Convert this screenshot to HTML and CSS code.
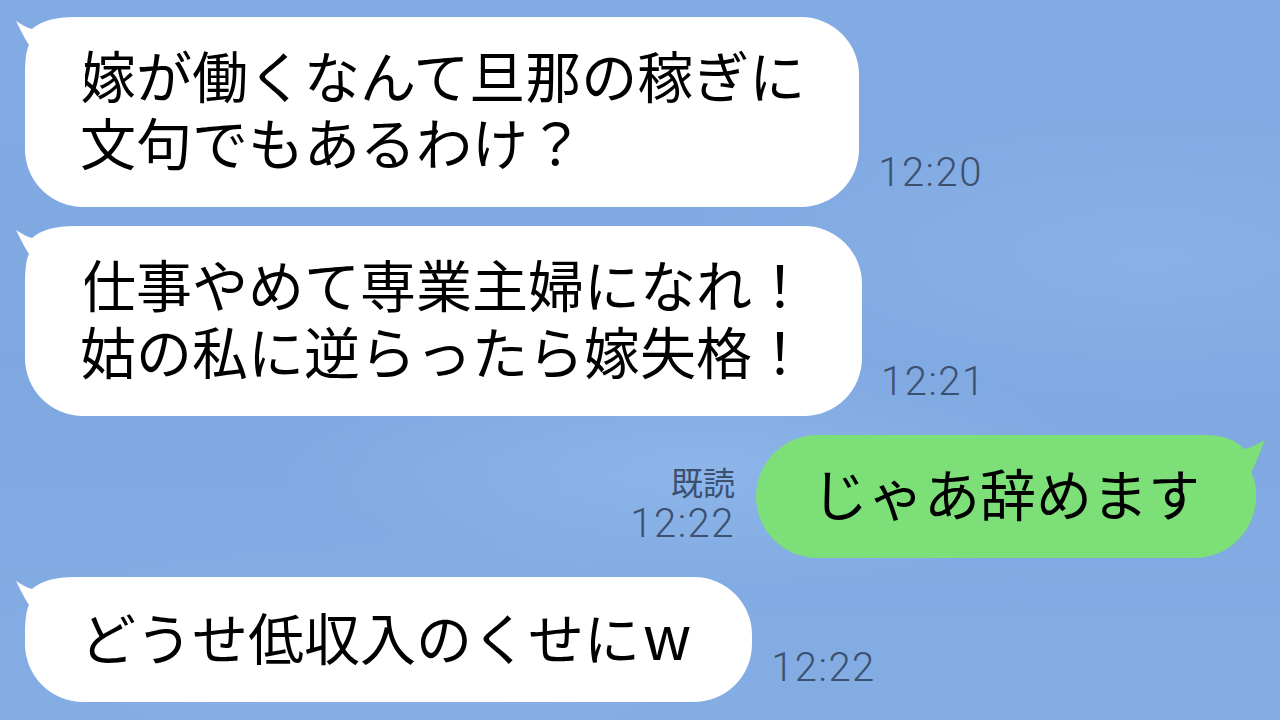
FILE: index.html
```html
<!DOCTYPE html>
<html lang="ja">
<head>
  <meta charset="UTF-8" />
  <meta name="viewport" content="width=device-width, initial-scale=1.0"/>
  <title>トーク</title>
  <link rel="stylesheet" href="styles.css">
</head>
<body>
  <div class="chat">
    <div class="row">
      <div class="bubble">
        <svg class="tail" viewBox="-10 0 70 70" width="70" height="70">
          <path d="M-9 4 C-3 8 3 11 7 12 C16 4 30 0 50 0 L70 0 L70 70 L0 70 L0 60 C0 44 1 34 4 28 C0 22 -5 12 -9 4 Z"/>
        </svg>
        <p>嫁が働くなんて旦那の稼ぎに<br>文句でもあるわけ？</p>
      </div>
      <div class="meta">
        <span class="time">12:20</span>
      </div>
    </div>

    <div class="row">
      <div class="bubble">
        <svg class="tail" viewBox="-10 0 70 70" width="70" height="70">
          <path d="M-9 4 C-3 8 3 11 7 12 C16 4 30 0 50 0 L70 0 L70 70 L0 70 L0 60 C0 44 1 34 4 28 C0 22 -5 12 -9 4 Z"/>
        </svg>
        <p>仕事やめて専業主婦になれ！<br>姑の私に逆らったら嫁失格！</p>
      </div>
      <div class="meta">
        <span class="time">12:21</span>
      </div>
    </div>

    <div class="row mine">
      <div class="meta">
        <span class="read">既読</span>
        <span class="time">12:22</span>
      </div>
      <div class="bubble green">
        <svg class="tail" viewBox="-10 0 70 70" width="70" height="70">
          <path d="M-9 5 C-2 9 6 13 12 14 C20 5 32 0 52 0 L70 0 L70 70 L0 70 L0 62 C0 50 2 42 5 38 C0 28 -5 14 -9 5 Z"/>
        </svg>
        <p>じゃあ辞めます</p>
      </div>
    </div>

    <div class="row">
      <div class="bubble">
        <svg class="tail" viewBox="-10 0 70 70" width="70" height="70">
          <path d="M-9 4 C-3 8 3 11 7 12 C16 4 30 0 50 0 L70 0 L70 70 L0 70 L0 60 C0 44 1 34 4 28 C0 22 -5 12 -9 4 Z"/>
        </svg>
        <p>どうせ低収入のくせに<span class="w">w</span></p>
      </div>
      <div class="meta">
        <span class="time">12:22</span>
      </div>
    </div>
  </div>
</body>
</html>
```

FILE: styles.css
```css
html, body {
  margin: 0;
  height: 100%;
}
body {
  font-family: "Noto Sans CJK JP", "Noto Sans", sans-serif;
  background-color: #82aae2;
  background-image:
    radial-gradient(ellipse 420px 120px at 700px 470px, rgba(150, 190, 238, 0.55), rgba(150, 190, 238, 0) 100%),
    radial-gradient(ellipse 500px 160px at 1150px 260px, rgba(146, 186, 236, 0.5), rgba(146, 186, 236, 0) 100%),
    radial-gradient(ellipse 380px 110px at 380px 640px, rgba(146, 186, 236, 0.4), rgba(146, 186, 236, 0) 100%),
    linear-gradient(180deg, #82abe3 0%, #7fa8e1 50%, #84ade4 100%);
  overflow: hidden;
}
.chat {
  display: flex;
  flex-direction: column;
  gap: 19px;
  padding: 17px 24px 0 25px;
}
.row {
  display: flex;
  align-items: flex-end;
}
.row.mine {
  justify-content: flex-end;
}
.bubble {
  position: relative;
  background: #fff;
  border-radius: 58px;
  padding: 23px 54px 33px 55px;
}
.bubble p {
  margin: 0;
  font-size: 56px;
  line-height: 67px;
  color: #000;
  white-space: nowrap;
}
.bubble .w {
  font-size: 60px;
  margin-left: 3px;
  margin-right: 7px;
}
.tail {
  position: absolute;
  left: -10px;
  top: 0;
  fill: #fff;
}
.green {
  background: #7ddf78;
  border-radius: 62px;
  padding-left: 56px;
  padding-right: 52px;
}
.green .tail {
  left: auto;
  right: -10px;
  fill: #7ddf78;
  transform: scaleX(-1);
}
.meta {
  display: flex;
  flex-direction: column;
  align-items: flex-end;
  margin: 0 0 14px 19px;
  color: #3c5070;
}
.mine .meta {
  margin: 0 21px 14px 0;
}
.time {
  font-family: Roboto, "Noto Sans", sans-serif;
  font-weight: 300;
  font-size: 40px;
  line-height: 40px;
  letter-spacing: 1.5px;
}
.read {
  font-size: 32px;
  line-height: 38px;
  margin-bottom: 4px;
}
```
